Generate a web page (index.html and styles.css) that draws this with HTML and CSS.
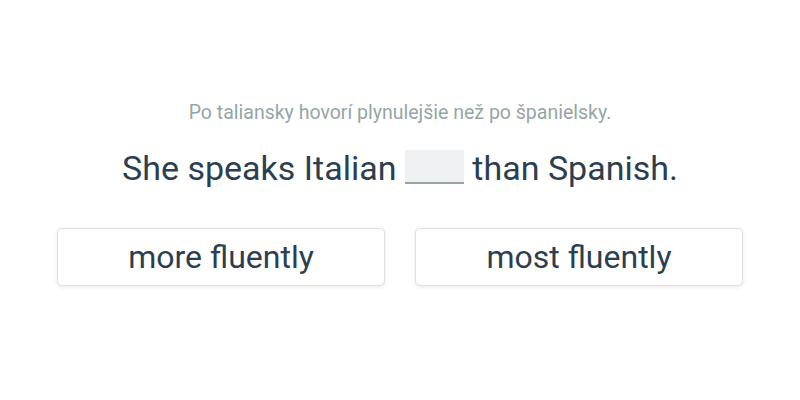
FILE: index.html
```html
<!DOCTYPE html>
<html>
<head>
<meta charset="utf-8">
<link rel="stylesheet" href="styles.css">
</head>
<body>
<div class="page">
  <p class="hint">Po taliansky hovorí plynulejšie než po španielsky.</p>
  <p class="sentence">She speaks Italian <span class="blank"></span> than Spanish.</p>
  <div class="options">
    <button class="option">more fluently</button>
    <button class="option">most fluently</button>
  </div>
</div>
</body>
</html>
```
FILE: styles.css
```css
html, body {
  margin: 0;
  padding: 0;
  background: #ffffff;
}
body {
  font-family: Roboto, "Noto Sans", sans-serif;
  width: 800px;
  height: 400px;
}
.page {
  padding: 100px 57px 0;
  display: flex;
  flex-direction: column;
  align-items: center;
}
.hint {
  margin: 0;
  font-size: 19.5px;
  line-height: 26px;
  color: #95a5a6;
}
.sentence {
  margin: 22px 0 0;
  font-size: 34px;
  line-height: 40px;
  color: #2c3e50;
  display: flex;
  align-items: center;
  white-space: pre;
}
.blank {
  display: inline-block;
  width: 59px;
  height: 32px;
  background: #eef0f2;
  border-bottom: 2px solid #95a5a6;
  position: relative;
  top: -1px;
}
.option {
  height: 58px;
  background: #ffffff;
  border: 1px solid #dde1e4;
  border-radius: 5px;
  box-shadow: 0 1px 4px rgba(0,0,0,0.1);
  font-family: Roboto, "Noto Sans", sans-serif;
  font-size: 32px;
  color: #2c3e50;
  padding: 0;
}
.options {
  margin-top: 40px;
  width: 686px;
  display: grid;
  grid-template-columns: 1fr 1fr;
  gap: 30px;
}
```
